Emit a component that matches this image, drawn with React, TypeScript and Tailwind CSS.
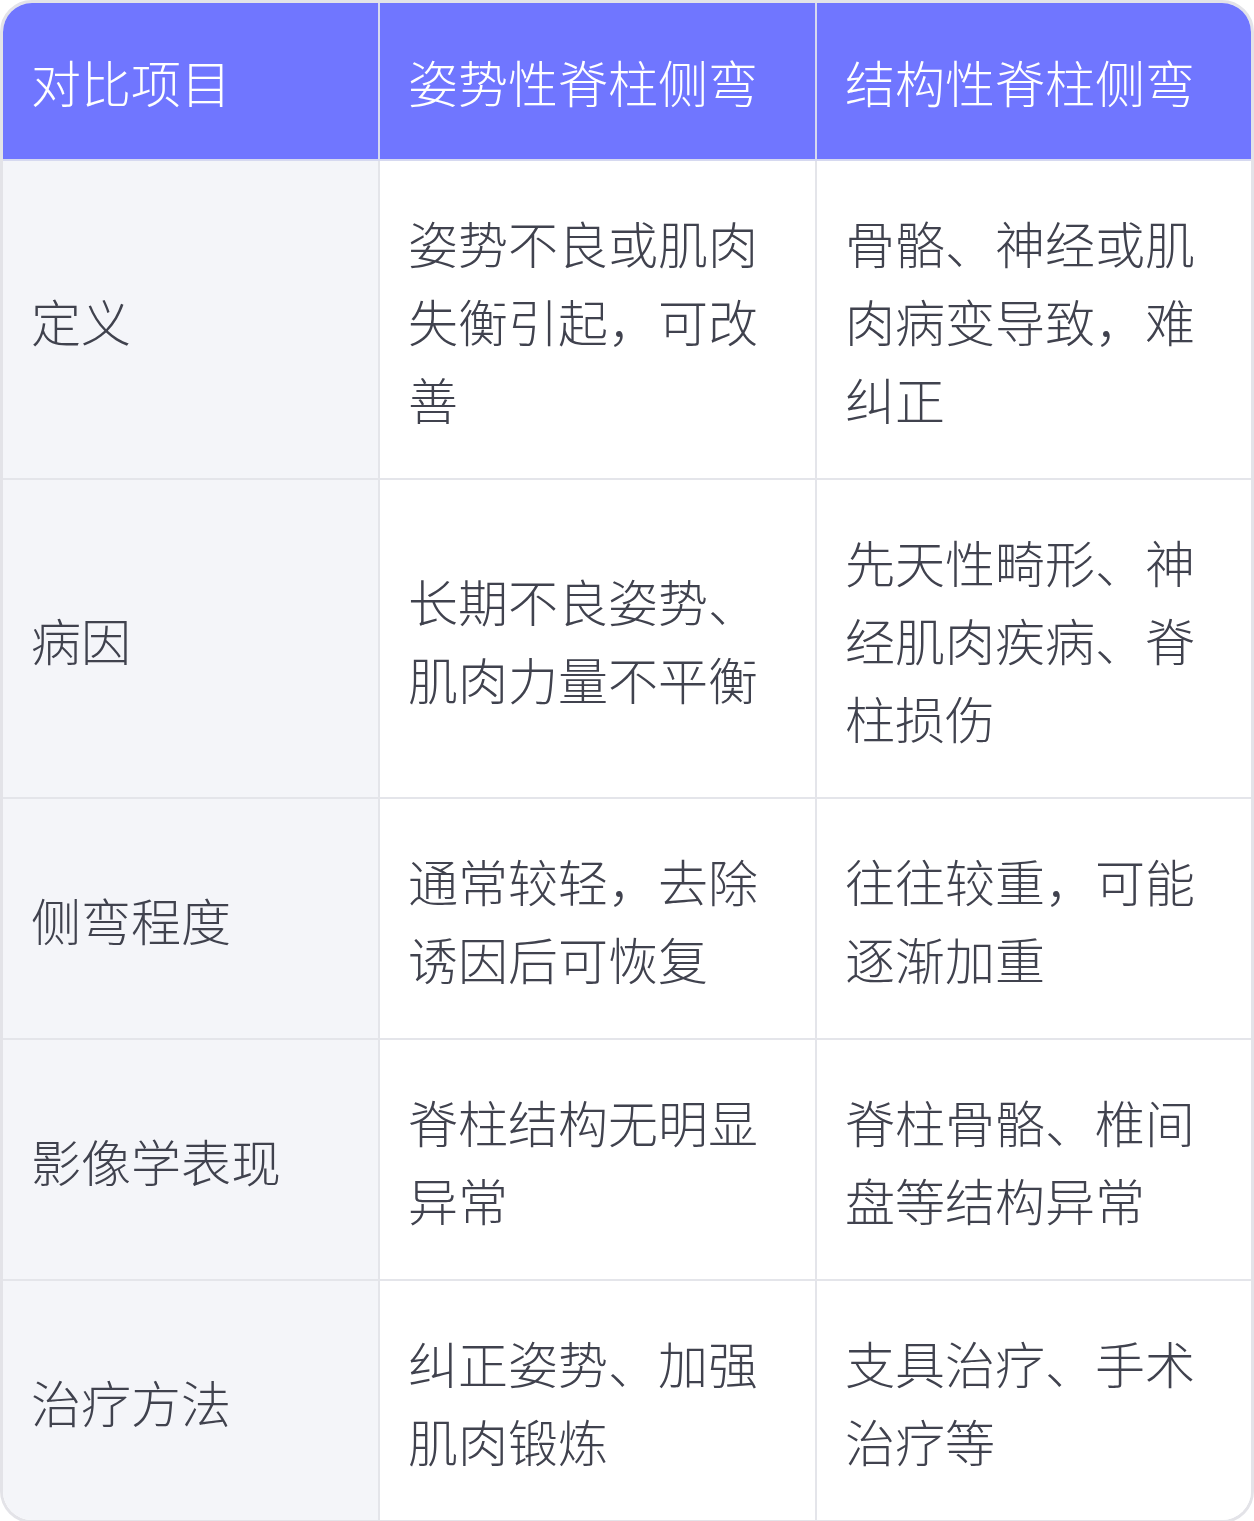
const rows: [string, string, string][] = [
  ['定义', '姿势不良或肌肉失衡引起，可改善', '骨骼、神经或肌肉病变导致，难纠正'],
  ['病因', '长期不良姿势、肌肉力量不平衡', '先天性畸形、神经肌肉疾病、脊柱损伤'],
  ['侧弯程度', '通常较轻，去除诱因后可恢复', '往往较重，可能逐渐加重'],
  ['影像学表现', '脊柱结构无明显异常', '脊柱骨骼、椎间盘等结构异常'],
  ['治疗方法', '纠正姿势、加强肌肉锻炼', '支具治疗、手术治疗等'],
];

export default function App() {
  return (
    <div className="w-[1254px] bg-white font-['Noto_Sans_CJK_SC',sans-serif] font-light">
      <div className="border-[3px] border-[#e3e3e8] rounded-[32px] overflow-hidden">
        <table className="w-full table-fixed border-collapse text-[50px] leading-[78px]">
          <colgroup>
            <col className="w-[376px]" />
            <col className="w-[437px]" />
            <col />
          </colgroup>
          <thead>
            <tr className="bg-[#7076ff] text-white">
              <th className="font-light text-left align-middle px-[28px] py-[39px] border-r-2 border-b-2 border-[#d6d9f0]">对比项目</th>
              <th className="font-light text-left align-middle px-[28px] py-[39px] border-r-2 border-b-2 border-[#d6d9f0]">姿势性脊柱侧弯</th>
              <th className="font-light text-left align-middle px-[28px] py-[39px] border-b-2 border-[#d6d9f0]">结构性脊柱侧弯</th>
            </tr>
          </thead>
          <tbody className="text-[#40424e]">
            {rows.map((r, i) => {
              const last = i === rows.length - 1;
              return (
                <tr key={r[0]}>
                  <td className={`bg-[#f4f5f9] align-middle px-[28px] py-[41.5px] border-r-2 border-[#e4e5ea] ${last ? '' : 'border-b-2'}`}>{r[0]}</td>
                  <td className={`bg-white align-middle px-[28px] py-[41.5px] border-r-2 border-[#e4e5ea] ${last ? '' : 'border-b-2'}`}>{r[1]}</td>
                  <td className={`bg-white align-middle px-[28px] py-[41.5px] border-[#e4e5ea] ${last ? '' : 'border-b-2'}`}>{r[2]}</td>
                </tr>
              );
            })}
          </tbody>
        </table>
      </div>
    </div>
  );
}
